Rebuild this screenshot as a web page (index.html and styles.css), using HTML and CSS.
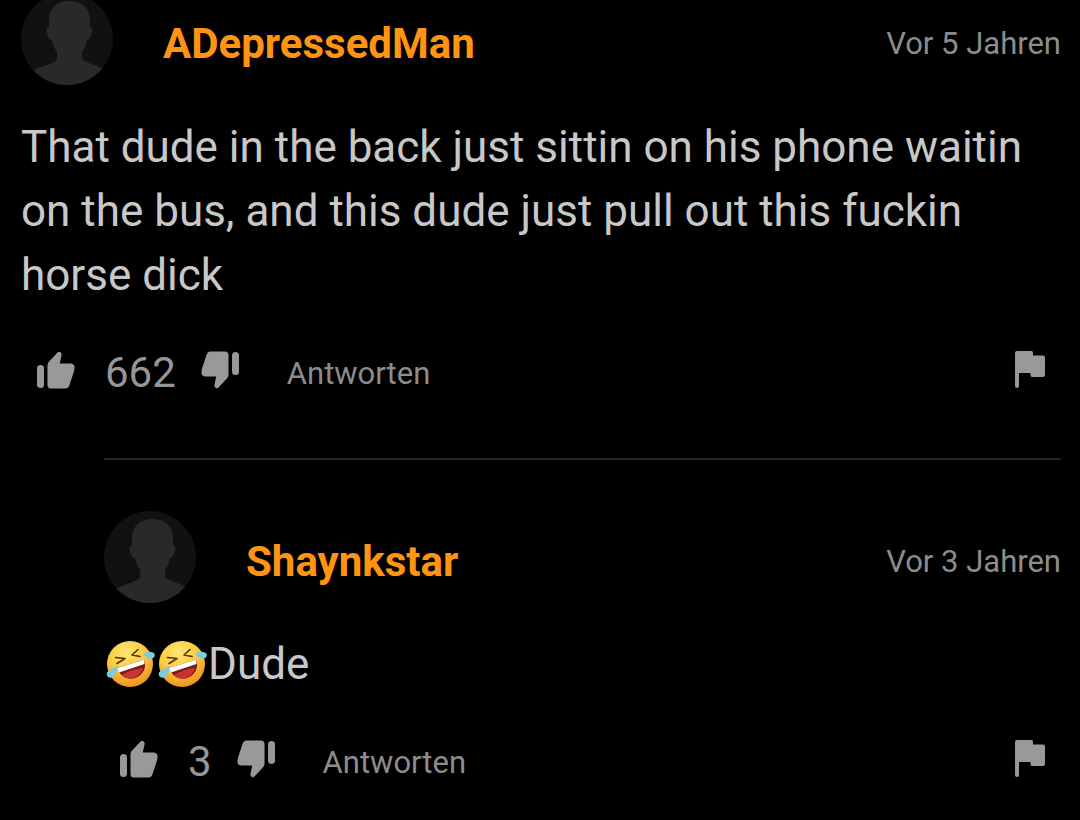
FILE: index.html
```html
<!DOCTYPE html>
<html lang="de">
<head>
<meta charset="utf-8">
<meta name="viewport" content="width=device-width, initial-scale=1">
<title>Kommentare</title>
<link rel="stylesheet" href="styles.css">
</head>
<body>
<svg class="defs" aria-hidden="true">
  <defs>
    <radialGradient id="face" cx="42%" cy="25%" r="80%">
      <stop offset="0" stop-color="#ffe572"/>
      <stop offset=".5" stop-color="#fccb40"/>
      <stop offset="1" stop-color="#ee8a1c"/>
    </radialGradient>
    <clipPath id="disc"><circle cx="46" cy="46" r="46"/></clipPath>
    <symbol id="person" viewBox="0 0 92 92">
      <circle cx="46" cy="46" r="46" fill="#111"/>
      <path clip-path="url(#disc)" fill="#292929" d="M48 8c-13 0-20 8-20 19v7c-3 0-3 5-1 9 1 3 2 4 4 4 1 6 3 9 5 12v8c-5 4-15 6-25 11v20h74V77c-8-4-19-7-24-11v-7c3-4 4-7 5-12 3 0 4-4 5-8 1-3 0-5-2-5v-7c0-12-8-19-21-19z"/>
    </symbol>
    <symbol id="up" viewBox="0 0 38 38">
      <rect x="0" y="14" width="7" height="23" rx="3.5"/>
      <path d="M10.500 14.500q0-2 1.200-3.500L20.500 1.500Q22 0 23.500 1.200 25 2.300 24.500 4.500L22.800 12.500H34Q38 13 37.500 17.500L36.800 21 32.500 34Q31.500 37.500 28.500 37.500H14Q10.500 37.500 10.500 34z"/>
    </symbol>
    <symbol id="flag" viewBox="0 0 30 38">
      <path d="M0 2Q0 0 2 0H16.500Q18 0 18 2V4.500H28Q30 4.500 30 6.500V24Q30 26 28 26H17Q15.500 26 15.500 24V22H4V35Q4 37 2 37T0 35z"/>
    </symbol>
    <symbol id="rofl" viewBox="0 0 50 48">
      <circle cx="25" cy="24" r="23" fill="url(#face)"/>
      <path d="M10.500 17.500l9.500 1-8 5M33 9.500l-6 5.500 8 1.500" fill="none" stroke="#513006" stroke-width="1.600" stroke-linejoin="round" stroke-linecap="round"/>
      <path d="M12 28L39.500 19.500c2 8-1 15-8 18-8 3.500-16-.5-19.500-9.500z" fill="#7c1a14"/>
      <path d="M17 35c6-4 13-6 21-7-2 5-4 8-8 9.500-5 2-9 1-13-2.500z" fill="#c93431"/>
      <path d="M12 28L39.500 19.500v4.500L14 32.500z" fill="#fff"/>
      <path d="M12 26c0 5-1 10-5 11.500-4 1-6-2-5-5 2-3 6-4 10-6.500z" fill="#7accdf"/>
      <path d="M38 14c3-2 7-3 10-1.500 3 1.500 2 5.500-1 6-4 .5-6-1.500-9-4.500z" fill="#7accdf"/>
    </symbol>
  </defs>
</svg>
<main class="comments">
  <article class="comment">
    <header class="head">
      <svg class="avatar" aria-hidden="true"><use href="#person"/></svg>
      <a class="name" href="#">ADepressedMan</a>
      <time class="date">Vor 5 Jahren</time>
    </header>
    <p class="text">That dude in the back just sittin on his phone waitin on the bus, and this dude just pull out this fuckin horse dick</p>
    <footer class="actions">
      <button class="icon" aria-label="Gefällt mir"><svg><use href="#up"/></svg></button>
      <span class="votes">662</span>
      <button class="icon down" aria-label="Gefällt mir nicht"><svg><use href="#up"/></svg></button>
      <button class="answer">Antworten</button>
      <button class="report" aria-label="Melden"><svg><use href="#flag"/></svg></button>
    </footer>
  </article>
  <article class="comment reply">
    <header class="head">
      <svg class="avatar" aria-hidden="true"><use href="#person"/></svg>
      <a class="name" href="#">Shaynkstar</a>
      <time class="date">Vor 3 Jahren</time>
    </header>
    <p class="text"><svg class="emoji" role="img" aria-label="🤣"><use href="#rofl"/></svg><svg class="emoji" role="img" aria-label="🤣"><use href="#rofl"/></svg>Dude</p>
    <footer class="actions">
      <button class="icon" aria-label="Gefällt mir"><svg><use href="#up"/></svg></button>
      <span class="votes">3</span>
      <button class="icon down" aria-label="Gefällt mir nicht"><svg><use href="#up"/></svg></button>
      <button class="answer">Antworten</button>
      <button class="report" aria-label="Melden"><svg><use href="#flag"/></svg></button>
    </footer>
  </article>
</main>
</body>
</html>
```
FILE: styles.css
```css
* { box-sizing: border-box; }
body {
  margin: 0;
  background: #000;
  color: #c8c8c8;
  font-family: Roboto, "Liberation Sans", sans-serif;
}
.defs { position: absolute; width: 0; height: 0; }
.comments { padding: 0 19px 0 21px; margin-top: -7px; }
.head { display: flex; align-items: center; }
.avatar { width: 92px; height: 92px; flex: none; }
.name {
  margin-left: 50px;
  padding-top: 10px;
  color: #ff9412;
  font-size: 42px;
  line-height: 48px;
  font-weight: 700;
  text-decoration: none;
}
.date {
  margin-left: auto;
  padding-top: 10px;
  color: #8c8c8c;
  font-size: 31px;
  line-height: 36px;
}
.text { margin: 30px 0 0; font-size: 44px; line-height: 64px; }
.actions {
  display: flex;
  align-items: center;
  margin-top: 38px;
  padding: 0 16px;
  height: 50px;
  color: #969696;
}
button {
  padding: 0;
  border: 0;
  background: none;
  color: inherit;
  font: inherit;
  cursor: pointer;
}
button svg { display: block; width: 38px; height: 38px; fill: #999; }
.votes { margin: 6px 25px 0 30px; font-size: 42px; line-height: 48px; }
.down { transform: rotate(180deg); }
.answer { margin: 8px 0 0 48px; font-size: 31px; line-height: 36px; color: #8c8c8c; }
.report { margin-left: auto; }
.report svg { width: 30px; }
.reply {
  margin: 63px 0 0 83px;
  padding-top: 51px;
  border-top: 2px solid #242424;
}
.reply .text { margin-top: 29px; }
.reply .actions { margin-top: 38px; }
.emoji { width: 50px; height: 48px; margin: 0 1px; vertical-align: -9px; }
```
